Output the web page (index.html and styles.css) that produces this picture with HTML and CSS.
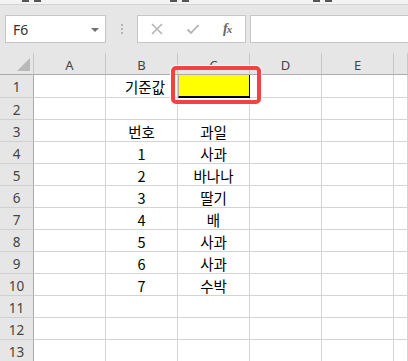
FILE: index.html
```html
<!DOCTYPE html>
<html lang="ko">
<head>
<meta charset="utf-8">
<link rel="stylesheet" href="styles.css">
</head>
<body>
<div class="app">
  <div class="ribbon">
    <i class="rb rb1"></i><i class="rb"></i>
    <i class="rb rb2"></i><i class="rb"></i>
    <i class="rb rb3"></i><i class="rb"></i>
  </div>
  <div class="fbar">
    <div class="namebox"><span class="nm">F6</span><span class="caret"></span></div>
    <div class="grip"><i></i><i></i><i></i></div>
    <div class="fbtns">
      <svg class="ic" width="14" height="14" viewBox="0 0 14 14"><path d="M2 2 L12 12 M12 2 L2 12" stroke="#b4b4b4" stroke-width="1.6" fill="none"/></svg>
      <svg class="ic" width="14" height="14" viewBox="0 0 14 14"><path d="M1.5 7.5 L5 11 L12.5 3" stroke="#b4b4b4" stroke-width="1.8" fill="none"/></svg>
      <span class="fx">f<sub>x</sub></span>
    </div>
    <div class="finput"></div>
  </div>
  <div class="sheet">
    <div class="ch corner"><span class="tri"></span></div>
    <div class="ch">A</div><div class="ch">B</div><div class="ch">C</div><div class="ch">D</div><div class="ch">E</div><div class="ch"></div>

    <div class="rh">1</div><div class="c"></div><div class="c right">기준값</div><div class="c sel"></div><div class="c"></div><div class="c"></div><div class="c"></div>
    <div class="rh">2</div><div class="c"></div><div class="c"></div><div class="c"></div><div class="c"></div><div class="c"></div><div class="c"></div>
    <div class="rh">3</div><div class="c"></div><div class="c">번호</div><div class="c">과일</div><div class="c"></div><div class="c"></div><div class="c"></div>
    <div class="rh">4</div><div class="c"></div><div class="c">1</div><div class="c">사과</div><div class="c"></div><div class="c"></div><div class="c"></div>
    <div class="rh">5</div><div class="c"></div><div class="c">2</div><div class="c">바나나</div><div class="c"></div><div class="c"></div><div class="c"></div>
    <div class="rh">6</div><div class="c"></div><div class="c">3</div><div class="c">딸기</div><div class="c"></div><div class="c"></div><div class="c"></div>
    <div class="rh">7</div><div class="c"></div><div class="c">4</div><div class="c">배</div><div class="c"></div><div class="c"></div><div class="c"></div>
    <div class="rh">8</div><div class="c"></div><div class="c">5</div><div class="c">사과</div><div class="c"></div><div class="c"></div><div class="c"></div>
    <div class="rh">9</div><div class="c"></div><div class="c">6</div><div class="c">사과</div><div class="c"></div><div class="c"></div><div class="c"></div>
    <div class="rh">10</div><div class="c"></div><div class="c">7</div><div class="c">수박</div><div class="c"></div><div class="c"></div><div class="c"></div>
    <div class="rh">11</div><div class="c"></div><div class="c"></div><div class="c"></div><div class="c"></div><div class="c"></div><div class="c"></div>
    <div class="rh">12</div><div class="c"></div><div class="c"></div><div class="c"></div><div class="c"></div><div class="c"></div><div class="c"></div>
    <div class="rh">13</div><div class="c"></div><div class="c"></div><div class="c"></div><div class="c"></div><div class="c"></div><div class="c"></div>
  </div>
  <div class="hl"></div>
</div>
</body>
</html>
```
FILE: styles.css
```css
html, body {
  margin: 0;
  padding: 0;
  width: 408px;
  height: 361px;
  overflow: hidden;
  background: #e6e6e6;
}
.app {
  position: relative;
  width: 408px;
  height: 361px;
  overflow: hidden;
  font-family: "Noto Sans", "Noto Sans CJK KR", sans-serif;
}
.ribbon {
  height: 4px;
  background: #f3f3f3;
  border-bottom: 1px solid #d4d4d4;
  display: flex;
  align-items: flex-start;
}
.rb {
  display: block;
  flex: none;
  width: 7px;
  height: 2px;
  background: #555;
  margin-left: 5px;
}
.rb1 { margin-left: 22px; }
.rb2 { margin-left: 129px; }
.rb3 { margin-left: 124px; }
.fbar {
  height: 28px;
  padding: 10px 0;
  display: flex;
  align-items: stretch;
}
.namebox {
  margin-left: 5px;
  width: 101px;
  box-sizing: border-box;
  background: #fff;
  border: 1px solid #c6c6c6;
  display: flex;
  align-items: center;
  justify-content: space-between;
  padding: 0 6px 0 7px;
}
.nm {
  font-size: 14px;
  color: #333;
}
.caret {
  width: 0;
  height: 0;
  border-left: 4px solid transparent;
  border-right: 4px solid transparent;
  border-top: 4px solid #707070;
  margin-top: 1px;
}
.grip {
  width: 31px;
  display: flex;
  flex-direction: column;
  align-items: center;
  justify-content: center;
  gap: 2px;
}
.grip i {
  display: block;
  width: 2px;
  height: 2px;
  background: #b4b4b4;
}
.fbtns {
  width: 109px;
  box-sizing: border-box;
  background: #fff;
  border: 1px solid #c6c6c6;
  display: flex;
  align-items: center;
  padding: 0 0 0 12px;
}
.ic { flex: none; }
.ic + .ic { margin-left: 22px; }
.fx {
  margin-left: 23px;
  font-family: "Liberation Serif", serif;
  font-style: italic;
  font-weight: bold;
  font-size: 14px;
  color: #666;
  line-height: 14px;
}
.fx sub {
  font-size: 11px;
  vertical-align: baseline;
  margin-left: -1px;
}
.finput {
  flex: 1;
  margin-left: 4px;
  margin-right: -4px;
  background: #fff;
  border: 1px solid #c6c6c6;
}
.sheet {
  display: grid;
  grid-template-columns: 34px 72px 72px 72px 72px 72px 1fr;
  grid-template-rows: 22px 23px repeat(12, 22px);
}
.sheet > div {
  box-sizing: border-box;
  display: flex;
  align-items: center;
  justify-content: center;
}
.ch {
  background: #e6e6e6;
  border-right: 1px solid #c8c8c8;
  border-bottom: 1px solid #ababab;
  font-size: 13px;
  color: #444;
  padding-top: 2px;
}
.corner {
  border-right: 1px solid #c8c8c8;
  justify-content: flex-end !important;
  align-items: flex-end !important;
  padding: 0 3px 3px 0;
}
.tri {
  width: 0;
  height: 0;
  border-left: 13px solid transparent;
  border-bottom: 13px solid #b9b9b9;
}
.rh {
  background: #e6e6e6;
  border-right: 1px solid #ababab;
  border-bottom: 1px solid #d0d0d0;
  font-size: 13.5px;
  color: #444;
  padding-top: 2px;
}
.c {
  background: #fff;
  border-right: 1px solid #d4d4d4;
  border-bottom: 1px solid #d4d4d4;
  font-family: "Noto Sans CJK KR", sans-serif;
  font-size: 14.5px;
  color: #000;
  padding-top: 1px;
}
.c.right {
  justify-content: flex-end !important;
  padding-right: 12px;
}
.c.sel {
  background: #ffff00;
  border-left: 1px solid #b0b0b0;
  border-right: 2px solid #000;
  border-bottom: 2px solid #000;
  margin-right: -1px;
}
.hl {
  position: absolute;
  left: 171px;
  top: 66px;
  width: 90px;
  height: 38px;
  box-sizing: border-box;
  border: 4px solid #f44242;
  border-radius: 5px;
  box-shadow: 0 0 0 1px #fff;
}
```
